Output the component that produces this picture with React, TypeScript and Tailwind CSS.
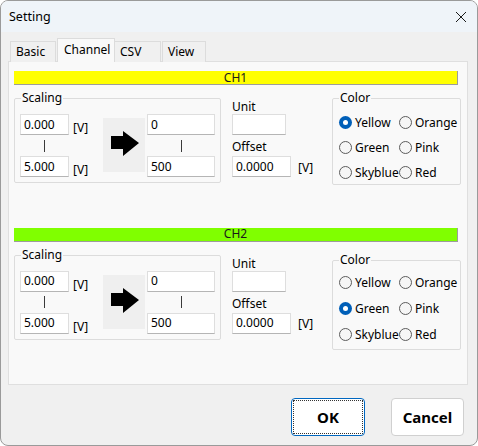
import React from "react";

function TextBox({ w, value }: { w: string; value: string }) {
  return (
    <div
      className={`${w} h-[21px] bg-white border border-[#dedede] border-b-[#b5b5b5] flex items-center pl-[3px] text-[12px] leading-[14px] text-black`}
    >
      {value}
    </div>
  );
}

function Sep() {
  return (
    <div className="h-[21px] flex items-center justify-center">
      <div className="w-[1px] h-[12px] bg-[#3a3a3a]" />
    </div>
  );
}

function Radio({ label, checked, tall }: { label: string; checked?: boolean; tall?: boolean }) {
  return (
    <div className={tall ? "flex items-center h-[26px]" : "flex items-center h-[25px]"}>
      {checked ? (
        <span className="w-[13px] h-[13px] rounded-full bg-[#005fb8] flex items-center justify-center shrink-0">
          <span className="w-[5px] h-[5px] rounded-full bg-white" />
        </span>
      ) : (
        <span className="w-[13px] h-[13px] rounded-full border border-[#5c5c5c] bg-[#f6f6f6] shrink-0" />
      )}
      <span className="ml-[3px] text-[12px] leading-[14px] text-black">{label}</span>
    </div>
  );
}

function Arrow() {
  return (
    <div className="w-[42px] h-[54px] bg-[#efefef] mt-[4px]">
      <svg width="42" height="54" viewBox="0 0 42 54">
        <path d="M8 18 H20 V13 L36 25 L20 38 V31 H8 Z" fill="#000" />
      </svg>
    </div>
  );
}

function Section({
  name,
  barClass,
  selected,
  second,
}: {
  name: string;
  barClass: string;
  selected: string;
  second?: boolean;
}) {
  const names = ["Yellow", "Orange", "Green", "Pink", "Skyblue", "Red"];
  return (
    <div className="h-[159px] flex flex-col">
      <div
        className={`h-[14px] w-[444px] ${barClass} border-r border-b border-[#9c9c9c] flex items-center justify-center text-[12px] leading-none text-[#1a1a1a]`}
      >
        {name}
      </div>
      <div className="flex items-start">
        {/* Scaling group */}
        <div className="relative mt-[13px] w-[207px] h-[85px] border border-[#dcdcdc] rounded-[2px] pl-[5px] pt-[15px] flex items-start">
          <span className="absolute left-[6px] top-[-8px] px-[1px] bg-[#f9f9f9] text-[12px] leading-[14px] text-black">
            Scaling
          </span>
          <div className="w-[49px] flex flex-col">
            <TextBox w="w-[49px]" value="0.000" />
            <Sep />
            <TextBox w="w-[49px]" value="5.000" />
          </div>
          <div className="w-[34px] pl-[4px] flex flex-col text-[12px] leading-[14px] text-black">
            <div className="h-[21px] flex items-end">[V]</div>
            <div className="h-[21px]" />
            <div className="h-[21px] flex items-end">[V]</div>
          </div>
          <Arrow />
          <div className="w-[68px] ml-[2px] flex flex-col">
            <TextBox w="w-[68px]" value="0" />
            <Sep />
            <TextBox w="w-[68px]" value="500" />
          </div>
        </div>

        {/* Unit / Offset */}
        <div className="ml-[11px] mt-[13px] w-[100px] flex flex-col text-[12px] leading-[14px] text-black">
          <div className="h-[16px] flex items-end">Unit</div>
          <TextBox w="w-[54px]" value="" />
          <div className="h-[21px] flex items-center pt-[3px]">Offset</div>
          <div className="flex items-center">
            <TextBox w="w-[59px]" value="0.0000" />
            <span className="ml-[7px] mt-[2px]">[V]</span>
          </div>
        </div>

        {/* Color group */}
        <div
          className={
            second
              ? "relative mt-[18px] w-[129px] h-[90px] border border-[#dcdcdc] rounded-[2px] pl-[6px] pt-[9px]"
              : "relative mt-[13px] w-[129px] h-[87px] border border-[#dcdcdc] rounded-[2px] pl-[6px] pt-[11px]"
          }
        >
          <span className="absolute left-[6px] top-[-8px] px-[1px] bg-[#f9f9f9] text-[12px] leading-[14px] text-black">
            Color
          </span>
          <div className="grid grid-cols-[60px_60px]">
            {names.map((n) => (
              <Radio key={n} label={n} checked={selected === n} tall={second} />
            ))}
          </div>
        </div>
      </div>
    </div>
  );
}

export default function App() {
  return (
    <div className="w-[478px] h-[446px] bg-white font-['Noto_Sans','Open_Sans',sans-serif]">
      <div className="w-[478px] h-[446px] border border-[#9a9a9a] rounded-[8px] overflow-hidden bg-[#f0f0f0] flex flex-col">
        {/* Title bar */}
        <div className="h-[31px] bg-[#eff4f9] flex items-center justify-between pl-[8px] pr-[10px]">
          <span className="text-[12.5px] leading-[14px] text-black">Setting</span>
          <svg width="12" height="12" viewBox="0 0 12 12">
            <path d="M1 1 L11 11 M11 1 L1 11" stroke="#1a1a1a" strokeWidth="1" fill="none" />
          </svg>
        </div>

        {/* Body */}
        <div className="flex flex-col pl-[7px] pt-[7px]">
          {/* Tabs */}
          <div className="relative z-10 flex items-end h-[23px] pl-[2px] -mb-[1px] text-[12px] leading-[14px] text-black">
            <div className="w-[46px] h-[21px] border border-b-0 border-[#dcdcdc] bg-[#f0f0f0] flex items-center pl-[5px]">
              Basic
            </div>
            <div className="w-[58px] h-[24px] ml-[1px] border border-b-0 border-[#dcdcdc] bg-[#f9f9f9] flex items-center pl-[6px] pb-[1px]">
              Channel
            </div>
            <div className="w-[46px] h-[21px] border border-b-0 border-l-0 border-[#dcdcdc] bg-[#f0f0f0] flex items-center pl-[5px]">
              CSV
            </div>
            <div className="w-[44px] h-[21px] ml-[1px] border border-b-0 border-[#dcdcdc] bg-[#f0f0f0] flex items-center pl-[5px]">
              View
            </div>
          </div>

          {/* Panel */}
          <div className="w-[460px] h-[324px] border border-[#dfdfdf] bg-[#f9f9f9] pl-[5px] pt-[9px] flex flex-col">
            <Section name="CH1" barClass="bg-[#ffff00]" selected="Yellow" />
            <Section name="CH2" barClass="bg-[#80ff00]" selected="Green" second />
          </div>

          {/* Buttons */}
          <div className="flex justify-end gap-[26px] mt-[13px] pr-[13px]">
            <div className="w-[74px] h-[38px] bg-white border border-[#0067c0] rounded-[4px] p-[1px]">
              <div className="w-full h-full border border-dotted border-[#333] flex items-center justify-center text-[15px] font-bold text-black">
                OK
              </div>
            </div>
            <div className="w-[73px] h-[38px] bg-white border border-[#d0d0d0] rounded-[4px] flex items-center justify-center text-[15px] font-bold text-black">
              Cancel
            </div>
          </div>
        </div>
      </div>
    </div>
  );
}
